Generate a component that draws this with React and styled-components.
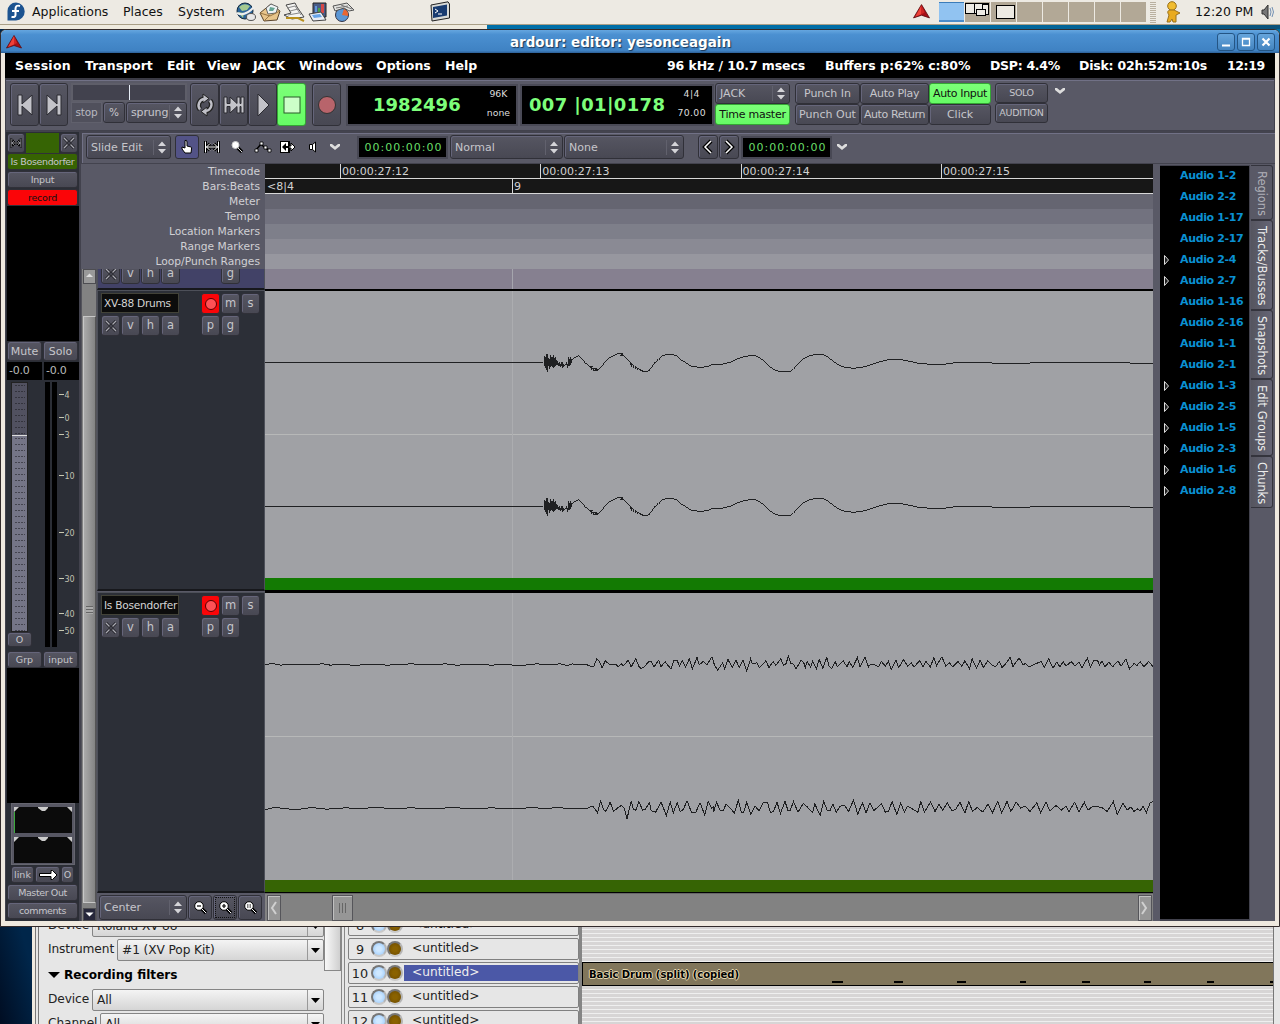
import React from "react";
import styled, { createGlobalStyle, css } from "styled-components";

const GlobalStyle = createGlobalStyle`
    * {
        box-sizing: border-box;
    }
    body {
        margin: 0;
        overflow: hidden;
        background: #001a36;
        font-family: "DejaVu Sans", sans-serif;
    }
    svg {
        display: block;
        flex: none;
    }
`;

// Wave forms
const drumWave = "M-795 97H36L40 99M43 78V107M46 80V113M49 72V119M52 72V126M55 83V109M58 86V116M61 76V112M64 82V109M67 80V110M70 74V115M73 84V111M76 81V108M79 90V106M82 94V105M85 98V109M88 97V107M91 101V110M94 97V109M97 96V113M100 103V111M103 104V108M106 101V106M109 95V106M112 101V114M115 80V109M118 88V107M121 80V106M124 86V99M124 92L132 83L139 81L145 76L150 80L157 87L166 99L173 105L180 112L192 120L203 121L212 113L224 98L238 84L252 76L266 70L278 74L290 86L302 97L314 109L326 117L347 126L357 122L366 110L375 99L386 86L398 77L410 73L430 74L440 78L454 90L466 96L476 105L490 110L512 112L530 110L550 103L580 102L600 97L620 87L640 81L660 77L678 78L692 85L706 97L718 109L732 119L746 124H780L790 118L804 102L820 86L838 77L862 73L882 75L896 83L912 95L928 106L944 112L972 115L1000 111L1024 104L1048 96L1076 89L1106 88L1130 92L1162 99L1200 103H1240L1270 99L1340 97L1410 100L1450 101L1500 99H1590L1650 97L1720 99H1800L1870 102";
const drumBursts = "M176 111H188M183 115H200M194 120H204M264 72H280M270 76H282M302 98V105M306 101V110M311 106V114M317 109V118M323 113V121M332 118V124M339 121V127M374 97V103M388 84V90M184 109V119M190 115V123";

const pianoTop = "-770,75 -750,72 -730,77 -700,74 -660,76 -620,73 -600,77 -570,74 -535,78 -500,74 -450,77 -390,73 -340,76 -300,73 -270,77 -220,74 -180,77 -150,75 -100,78 -60,73 -30,76 0,73 10,76 20,78 33,73 45,76 68,75 80,80 88,82 96,58 104,68 110,86 118,64 124,70 130,75 146,75 152,82 160,72 165,80 178,62 186,82 198,58 206,80 212,88 222,80 232,66 238,66 246,82 258,62 264,82 275,66 282,78 290,88 298,62 306,62 312,80 320,64 328,82 338,58 346,88 358,54 364,76 374,66 384,76 397,52 404,78 412,92 425,70 430,88 439,60 450,84 460,62 468,84 478,62 488,95 498,58 502,72 515,70 521,84 538,64 546,84 557,66 564,78 577,58 584,78 590,74 597,50 603,72 610,74 617,88 630,62 638,72 641,84 646,66 655,84 660,64 670,88 677,60 687,86 697,54 703,80 710,88 719,66 725,82 740,64 750,82 756,66 765,84 777,54 784,82 797,52 806,82 812,74 820,74 832,82 840,66 850,80 858,66 866,90 878,62 885,84 898,60 908,80 918,70 925,82 940,64 948,82 956,66 968,82 977,54 984,78 998,52 1008,80 1018,70 1026,82 1040,66 1050,80 1058,64 1070,88 1077,58 1088,86 1098,62 1106,84 1118,64 1126,74 1138,82 1148,66 1155,84 1165,72 1176,54 1184,82 1190,70 1200,56 1210,76 1216,72 1226,82 1240,74 1258,66 1265,84 1277,58 1288,86 1298,68 1306,82 1315,66 1322,80 1336,66 1346,80 1356,68 1364,84 1378,56 1386,82 1396,62 1404,62 1410,76 1416,64 1424,82 1434,68 1444,82 1458,64 1466,80 1479,58 1488,88 1500,72 1508,78 1516,66 1526,82 1538,66 1550,82";

const pianoBottom = "-770,510 -745,504 -720,507 -690,511 -650,504 -610,509 -560,505 -520,508 -480,503 -440,508 -390,505 -330,508 -280,504 -230,508 -180,505 -120,508 -70,504 -40,508 0,503 16,508 30,506 70,508 80,502 86,500 98,520 106,485 114,510 120,516 131,488 140,516 150,506 160,498 168,506 175,538 186,486 192,510 198,512 206,486 216,512 222,510 234,490 238,514 250,518 264,488 278,528 288,488 296,520 306,490 314,516 322,510 332,484 344,520 354,520 366,490 378,526 387,486 396,506 400,502 402,516 409,488 418,512 426,514 434,494 444,506 456,520 466,482 474,520 480,518 488,488 498,524 510,500 520,514 532,488 542,488 550,520 558,516 567,488 576,522 588,486 596,514 602,512 610,486 622,518 628,506 636,492 646,502 660,520 666,492 672,510 680,528 689,486 698,512 706,512 713,494 722,518 732,500 744,498 754,516 767,482 778,524 790,490 800,520 810,490 820,514 840,492 850,518 858,516 868,486 880,525 890,490 900,518 908,500 920,508 935,518 943,486 952,518 968,488 980,516 990,494 1000,512 1012,490 1024,514 1034,510 1045,488 1058,520 1068,486 1078,516 1090,504 1105,518 1118,494 1130,520 1144,486 1154,520 1168,486 1178,516 1192,488 1204,506 1216,500 1228,516 1246,490 1256,520 1270,488 1280,514 1296,498 1310,512 1322,500 1330,516 1345,488 1356,518 1370,488 1380,512 1392,500 1404,502 1416,504 1430,516 1446,486 1456,525 1471,490 1482,512 1492,502 1500,516 1508,508 1516,514 1524,500 1532,520 1542,490 1550,486";

const regions = [
    ["Audio 1-2"], ["Audio 2-2"], ["Audio 1-17"], ["Audio 2-17"],
    ["Audio 2-4", true], ["Audio 2-7", true], ["Audio 1-16"], ["Audio 2-16"],
    ["Audio 1-1"], ["Audio 2-1"], ["Audio 1-3", true], ["Audio 2-5", true],
    ["Audio 1-5", true], ["Audio 2-3", true], ["Audio 1-6", true], ["Audio 2-8", true],
];

const tabs = [["Regions", 55], ["Tracks/Busses", 90], ["Snapshots", 69], ["Edit Groups", 77], ["Chunks", 52]];

const rulers = [
    ["Meter", "#656571"], ["Tempo", "#72727f"], ["Location Markers", "#7e7f8a"],
    ["Range Markers", "#8a8a94"], ["Loop/Punch Ranges", "#97979f"],
];

const meterMarks = [["4", 394], ["0", 417], ["3", 434], ["10", 475], ["20", 532], ["30", 578], ["40", 613], ["50", 630]];

export default function App() {
    return (
        <Desktop>
            <GlobalStyle/>
            <GnomePanel/>
            <BackEdge/>
            <Rosegarden/>
            <Ardour/>
        </Desktop>
    );
}

function GnomePanel() {
    return (
        <PanelBar>
            <FedoraIcon/>
            <PanelText $ml={7} $w={77}>Applications</PanelText>
            <PanelText $ml={14} $w={41}>Places</PanelText>
            <PanelText $ml={14} $w={49}>System</PanelText>
            <Launchers/>
            <TerminalIcon/>
            <Spacer/>
            <RedArrow width="17" height="15"/>
            <Pager>
                <Desk $active/>
                <Desk>
                    <svg width="25" height="20" fill="#edeae3" stroke="#000" shapeRendering="crispEdges">
                        <rect x=".5" y="1.500" width="9" height="10"/><rect x="9.500" y="1.500" width="14" height="10"/>
                        <rect x="17.500" y="2.500" width="6" height="10"/><rect x="11.500" y="7.500" width="9" height="6"/>
                    </svg>
                </Desk>
                <Desk>
                    <svg width="25" height="20" fill="#edeae3" stroke="#000" shapeRendering="crispEdges">
                        <rect x="5.500" y="3.500" width="18" height="13"/>
                    </svg>
                </Desk>
                <Desk/><Desk/><Desk/><Desk/><Desk/>
            </Pager>
            <PanelGrip/>
            <PersonIcon/>
            <PanelText $ml={12} $w={58}>12:20 PM</PanelText>
            <VolumeIcon/>
        </PanelBar>
    );
}

function Ardour() {
    return (
        <ArdourWindow>
            <TitleBar>
                <RedArrow width="16" height="14"/>
                <Title>ardour: editor: yesonceagain</Title>
                <WinButton><svg width="18" height="18"><path d="M5 12.500H13" stroke="#fff" strokeWidth="2"/></svg></WinButton>
                <WinButton><svg width="18" height="18"><path d="M5.500 5.500H12.500V12.500H5.500ZM5 6H13" stroke="#fff" fill="none" strokeWidth="1.300"/></svg></WinButton>
                <WinButton><svg width="18" height="18"><path d="M5.500 5.500L12.500 12.500M12.500 5.500L5.500 12.500" stroke="#fff" strokeWidth="2.200"/></svg></WinButton>
            </TitleBar>
            <WindowBody>
                <MenuBar>
                    <MenuText $w={70} $ls={0.25}>Session</MenuText>
                    <MenuText $w={82}>Transport</MenuText>
                    <MenuText $w={40}>Edit</MenuText>
                    <MenuText $w={46}>View</MenuText>
                    <MenuText $w={46} $ls={-0.3}>JACK</MenuText>
                    <MenuText $w={77}>Windows</MenuText>
                    <MenuText $w={69}>Options</MenuText>
                    <MenuText>Help</MenuText>
                    <Spacer/>
                    <MenuText $w={158} $ls={-0.1}>96 kHz / 10.7 msecs</MenuText>
                    <MenuText $w={165}>Buffers p:62% c:80%</MenuText>
                    <MenuText $w={89} $ls={-0.3}>DSP: 4.4%</MenuText>
                    <MenuText $w={148} $ls={-0.2}>Disk: 02h:52m:10s</MenuText>
                    <MenuText $w={48} $ls={-0.4}>12:19</MenuText>
                </MenuBar>
                <Transport/>
                <Main>
                    <MixerStrip/>
                    <Editor>
                        <EditToolbar/>
                        <EditorBody>
                            <EditorLeft>
                                <RulerLabels>
                                    <span>Timecode</span>
                                    <span>Bars:Beats</span>
                                    {rulers.map(([name]) => <span key={name}>{name}</span>)}
                                </RulerLabels>
                                <TracksLeft>
                                    <VScroll>
                                        <ScrollArrow $size={15}><svg width="13" height="13"><path d="M3 8L6.500 4.500L10 8Z" fill="#ddd"/></svg></ScrollArrow>
                                        <VThumb><Grip/></VThumb>
                                        <ScrollArrow $size={13} $dark><svg width="13" height="13"><path d="M2.500 4.500H10.500L6.500 8.500Z" fill="#fff"/></svg></ScrollArrow>
                                    </VScroll>
                                    <Headers>
                                        <TrackHeader $partial><HeaderButtons partial/></TrackHeader>
                                        <TrackHeader><TrackTop name="XV-88 Drums"/><HeaderButtons/></TrackHeader>
                                        <TrackHeader><TrackTop name="Is Bosendorfer"/><HeaderButtons/></TrackHeader>
                                        <ZoomRow>
                                            <Select $w={88} $h={25}>Center<UpDown/></Select>
                                            <Button $w={24} $h={25}><ZoomIcon sign="M4 6H8"/></Button>
                                            <Button $w={24} $h={25} $dotted><ZoomIcon sign="M4 6H8M6 4V8"/></Button>
                                            <Button $w={24} $h={25}><ZoomIcon sign="M4 5H5.500M6.500 5H8M4 7H5.500M6.500 7H8"/></Button>
                                        </ZoomRow>
                                    </Headers>
                                </TracksLeft>
                            </EditorLeft>
                            <Canvas/>
                            <SidePanel/>
                        </EditorBody>
                    </Editor>
                </Main>
            </WindowBody>
        </ArdourWindow>
    );
}

function Transport() {
    return (
        <TransportBar>
            <Button $w={29} $h={43}><TIcon d="M5 6H9V15L19 6V26L9 17V26H5Z"/></Button>
            <Button $w={29} $h={43}><TIcon d="M5 6L15 15V6H19V26H15V17L5 26Z"/></Button>
            <Shuttle>
                <ShuttleTrack><ShuttleMark/></ShuttleTrack>
                <Row $gap={1}>
                    <FlatBox $w={31}>stop</FlatBox>
                    <Button $w={22} $h={21} $fs={10.5}>%</Button>
                    <Select $w={61} $h={21} $ls={-0.15}>sprung<UpDown/></Select>
                </Row>
            </Shuttle>
            <Row $ml={3}>
                <Button $w={29} $h={43}>
                    <svg width="24" height="32" fill="none">
                        <path d="M7 20.500A6.500 6.500 0 0 1 11 10M17 11.500A6.500 6.500 0 0 1 13 22" stroke="#222" strokeWidth="5"/>
                        <path d="M10 5L16 9.500L10 14ZM14 18L8 22.500L14 27Z" fill="#c0c0c8" stroke="#222"/>
                        <path d="M7 20.500A6.500 6.500 0 0 1 11 10M17 11.500A6.500 6.500 0 0 1 13 22" stroke="#c0c0c8" strokeWidth="2.400"/>
                    </svg>
                </Button>
                <Button $w={29} $h={43}><TIcon d="M2 8H5V14.500H8V8L15 14.500V8H18V14.500H19V8H22V24H19V17.500H18V24H15V17.500L8 24V17.500H5V24H2Z"/></Button>
                <Button $w={29} $h={43}><TIcon d="M7 5L18 16L7 27Z"/></Button>
                <Button $w={29} $h={43} $tone="green"><svg width="18" height="18"><rect x="1" y="1" width="16" height="16" fill="#ccffc8" stroke="#285a28"/></svg></Button>
            </Row>
            <Button $ml={6} $w={29} $h={43}><svg width="20" height="20"><circle cx="10" cy="10" r="8.500" fill="#b8646b" stroke="#333"/></svg></Button>
            <BigClock $w={172} $ml={5}>
                <ClockDigits $w={88} $ml={25}>1982496</ClockDigits>
                <ClockSide><span>96K</span><span>none</span></ClockSide>
            </BigClock>
            <BigClock $w={194} $ml={2}>
                <ClockDigits $w={138} $ml={7} $ls={0.35}>007 |01|0178</ClockDigits>
                <ClockSide $ls={0.4}><span>4|4</span><span>70.00</span></ClockSide>
            </BigClock>
            <Stack $ml={1}>
                <Select $w={75} $h={21}>JACK<UpDown/></Select>
                <Button $w={75} $h={21} $fs={11} $ls={-0.25} $tone="green">Time master</Button>
            </Stack>
            <Stack $ml={5}>
                <Button $w={65} $h={21} $fs={11}>Punch In</Button>
                <Button $w={65} $h={21} $fs={11}>Punch Out</Button>
            </Stack>
            <Stack $ml={0}>
                <Button $w={69} $h={21} $fs={11} $ls={-0.3}>Auto Play</Button>
                <Button $w={69} $h={21} $fs={11} $ls={-0.4}>Auto Return</Button>
            </Stack>
            <Stack $ml={0}>
                <Button $w={62} $h={21} $fs={11} $ls={-0.35} $tone="green">Auto Input</Button>
                <Button $w={62} $h={21} $fs={11}>Click</Button>
            </Stack>
            <Stack $ml={4}>
                <Button $w={53} $h={20} $fs={9.5} $ls={-0.4}>SOLO</Button>
                <Button $w={53} $h={20} $fs={9.5} $ls={-0.3}>AUDITION</Button>
            </Stack>
            <Chevron/>
        </TransportBar>
    );
}

function EditToolbar() {
    return (
        <ToolRow>
            <Select $w={85} $h={24}>Slide Edit<UpDown/></Select>
            <Button $w={24} $h={24} $ml={4} $tone="blue">
                <svg width="14" height="16"><path d="M5 1.500Q7 .5 7 3V7L11 8Q12 8 11.500 10L11 14H5L2 10V8L5 9Z" fill="#fff" stroke="#000"/></svg>
            </Button>
            <ToolIcon $w={25}><RangeIcon/></ToolIcon>
            <ToolIcon $w={26}><svg width="14" height="14"><path d="M7 7L12 12" stroke="#000" strokeWidth="3.500"/><path d="M7 7L12 12" stroke="#ddd" strokeWidth="1"/><circle cx="5.500" cy="5" r="3.500" fill="#fff" stroke="#ccc"/></svg></ToolIcon>
            <ToolIcon $w={25}>
                <svg width="18" height="14"><path d="M2 10L7 4L11 8L15 10" stroke="#000" fill="none" strokeWidth="1.500"/><path d="M1 9h3v3h-3zM6 2h3v3h-3zM10 6h3v3h-3zM14 9h3v3h-3z" fill="#fff" stroke="#000" strokeWidth=".8"/></svg>
            </ToolIcon>
            <ToolIcon $w={25}>
                <svg width="18" height="14"><rect x="1.500" y="1.500" width="8" height="11" fill="#fff" stroke="#000"/><path d="M10 1V13" stroke="#000" strokeWidth="2"/><path d="M3 7L7 3V6H9V8H7V11Z" fill="#000"/><path d="M10 6H12V3L16 7L12 11V8H10Z" fill="#fff" stroke="#000"/></svg>
            </ToolIcon>
            <ToolIcon $w={25}><svg width="10" height="14"><path d="M1.500 4.500H4.500V9.500H1.500Z" fill="#fff" stroke="#000"/><path d="M4.500 4.500L7.500 2V12L4.500 9.500Z" fill="#fff" stroke="#000"/></svg></ToolIcon>
            <ToolIcon $w={20}><ChevronIcon/></ToolIcon>
            <SmallClock $ml={12}>00:00:00:00</SmallClock>
            <Select $w={113} $h={24} $ml={2}>Normal<UpDown/></Select>
            <Select $w={120} $h={24} $ml={1}>None<UpDown/></Select>
            <Button $w={20} $h={24} $ml={14}><svg width="12" height="16"><path d="M9 2L3 8L9 14" stroke="#000" fill="none" strokeWidth="4"/><path d="M9 2L3 8L9 14" stroke="#fff" fill="none" strokeWidth="1.500"/></svg></Button>
            <Button $w={20} $h={24} $ml={1}><svg width="12" height="16"><path d="M3 2L9 8L3 14" stroke="#000" fill="none" strokeWidth="4"/><path d="M3 2L9 8L3 14" stroke="#fff" fill="none" strokeWidth="1.500"/></svg></Button>
            <SmallClock $ml={2}>00:00:00:00</SmallClock>
            <ToolIcon $w={20}><ChevronIcon/></ToolIcon>
        </ToolRow>
    );
}

function MixerStrip() {
    return (
        <Strip>
            <Row $gap={1}>
                <Button $w={18} $h={20}><RangeIcon small/></Button>
                <ColorSwatch/>
                <Button $w={18} $h={20}><CrossIcon/></Button>
            </Row>
            <StripButton $ls={-0.35} $tone="olive">Is Bosendorfer</StripButton>
            <StripButton $mt={1}>Input</StripButton>
            <StripButton $mt={1} $tone="red">record</StripButton>
            <BlackBox $h={135}/>
            <Row $gap={1}>
                <Button $w={35} $h={20} $fs={11}>Mute</Button>
                <Button $w={35} $h={20} $fs={11}>Solo</Button>
            </Row>
            <Row $gap={2} $mt={1}>
                <Peak>-0.0</Peak>
                <Peak>-0.0</Peak>
            </Row>
            <FaderArea>
                <FaderColumn>
                    <Fader><FaderTop/><FaderBottom/></Fader>
                    <Button $w={25} $h={15} $fs={9.5}>O</Button>
                </FaderColumn>
                <MeterBars><i/><i/></MeterBars>
                <svg width="22" height="266" fontSize="8" fill="#c0c0b0">
                    {meterMarks.map(([label, y]) => (
                        <g key={label}>
                            <path d={`M2 ${y - 381.5}H7`} stroke="#c8c8b0"/>
                            <text x="7.500" y={y - 378.5}>{label}</text>
                        </g>
                    ))}
                </svg>
            </FaderArea>
            <Row $gap={1}>
                <Button $w={35} $h={17} $fs={9.5}>Grp</Button>
                <Button $w={35} $h={17} $fs={9.5}>input</Button>
            </Row>
            <BlackBox $h={135}/>
            <PanBox>
                <PanIcon active/>
                <PanIcon/>
            </PanBox>
            <Row $gap={1} $ml={4}>
                <Button $w={23} $h={17} $fs={9.5}>link</Button>
                <Button $w={25} $h={17}><svg width="20" height="12"><path d="M1.500 4.500H13V1.500H14.500L19 6L14.500 10.500H13V7.500H1.500Z" fill="#fff" stroke="#000"/></svg></Button>
                <Button $w={13} $h={17} $fs={9.5}>O</Button>
            </Row>
            <StripButton $mt={1} $ls={-0.4}>Master Out</StripButton>
            <StripButton $mt={1} $ls={-0.4}>comments</StripButton>
        </Strip>
    );
}

function TrackTop({ name }) {
    return (
        <Row $pl={1}>
            <NameBox>{name}</NameBox>
            <Button $w={19} $h={21} $ml={22} $tone="red"><svg width="14" height="14"><circle cx="7" cy="7" r="5.500" fill="#ff5055" stroke="#5a0000"/></svg></Button>
            <Button $w={19} $h={21} $ml={1} $fs={11.5}>m</Button>
            <Button $w={19} $h={21} $ml={1} $fs={11.5}>s</Button>
        </Row>
    );
}

function HeaderButtons({ partial }) {
    return (
        <Row $pl={1} $gap={1} $mt={1}>
            <Button $w={19} $h={21}><CrossIcon/></Button>
            <Button $w={19} $h={21} $fs={11.5}>v</Button>
            <Button $w={19} $h={21} $fs={11.5}>h</Button>
            <Button $w={19} $h={21} $fs={11.5}>a</Button>
            {partial ? <Blank/> : <Button $w={19} $h={21} $fs={11.5} $ml={20}>p</Button>}
            <Button $w={19} $h={21} $fs={11.5}>g</Button>
        </Row>
    );
}

function Canvas() {
    return (
        <CanvasColumn>
            <TimeRuler>
                {["00:00:27:12", "00:00:27:13", "00:00:27:14", "00:00:27:15"].map((t) => <Tick key={t}>{t}</Tick>)}
            </TimeRuler>
            <TimeRuler>
                <BarTick $w={247} $first>&lt;8|4</BarTick>
                <BarTick>9</BarTick>
            </TimeRuler>
            {rulers.map(([name, color]) => <RulerBand key={name} $color={color}/>)}
            <PartialTrack><svg width="888" height="20"><path d="M247.500 0V20" stroke="#a5a5ad"/></svg></PartialTrack>
            <Wave $gap={2}>
                <svg width="888" height="287" fill="none" shapeRendering="crispEdges">
                    <path d="M0 143.500H888" stroke="#b7b8b8"/>
                    <path d="M247.500 0V287" stroke="#acadb0"/>
                    {[0, 144].map((dy) => (
                        <g key={dy} transform={`translate(265 ${39 + dy}) scale(.33333)`} stroke="#1f2022" strokeWidth="3">
                            <path d={drumWave}/>
                            <path d={drumBursts}/>
                        </g>
                    ))}
                </svg>
            </Wave>
            <RegionBar $color="#137a03"/>
            <Wave $gap={3}>
                <svg width="888" height="287" fill="none" shapeRendering="crispEdges">
                    <path d="M0 143.500H888" stroke="#b7b8b8"/>
                    <path d="M247.500 0V287" stroke="#acadb0"/>
                    <g transform="translate(295 46.500) scale(.3827 .3333)" stroke="#1f2022">
                        <polyline points={pianoTop} vectorEffect="non-scaling-stroke"/>
                        <polyline points={pianoBottom} vectorEffect="non-scaling-stroke"/>
                    </g>
                </svg>
            </Wave>
            <RegionBar $color="#366404"/>
            <HScroll>
                <HButton><svg width="12" height="24"><path d="M8 6L4 12L8 18" stroke="#d0d0d0" strokeWidth="2" fill="none"/></svg></HButton>
                <HThumb><svg width="12" height="10"><path d="M2.500 0V10M5.500 0V10M8.500 0V10" stroke="#666"/></svg></HThumb>
                <HButton><svg width="12" height="24"><path d="M3 6L7 12L3 18" stroke="#d0d0d0" strokeWidth="2" fill="none"/></svg></HButton>
            </HScroll>
        </CanvasColumn>
    );
}

function SidePanel() {
    return (
        <Side>
            <RegionList>
                {regions.map(([name, children]) => (
                    <RegionRow key={name}>
                        <svg width="16" height="12">{children && <path d="M1.500 1.500V10.500L5.500 6Z" fill="#222" stroke="#ddd"/>}</svg>
                        {name}
                    </RegionRow>
                ))}
            </RegionList>
            <Tabs>
                {tabs.map(([name, h], i) => <Tab key={name} $h={h} $active={i === 0}>{name}</Tab>)}
            </Tabs>
        </Side>
    );
}

function Rosegarden() {
    return (
        <RoseWindow>
            <RoseSide>
                <FormRow>Device<Combo>Roland XV-88<DownArrow/></Combo></FormRow>
                <FormRow>Instrument<Combo>#1 (XV Pop Kit)<DownArrow/></Combo></FormRow>
                <FormHeading><svg width="12" height="8"><path d="M0 1H12L6 7Z"/></svg>Recording filters</FormHeading>
                <FormRow>Device<Combo>All<DownArrow/></Combo></FormRow>
                <FormRow>Channel<Combo>All<DownArrow/></Combo></FormRow>
            </RoseSide>
            <RoseScroll/>
            <TrackList>
                {[8, 9, 10, 11, 12].map((n) => (
                    <RoseTrack key={n}>
                        <b>{n}</b>
                        <Led $color="#79b8fb" $shine="#cfe8ff"/>
                        <Led $color="#5d3f00" $shine="#8a6200"/>
                        <Untitled $active={n === 10}>&lt;untitled&gt;</Untitled>
                    </RoseTrack>
                ))}
            </TrackList>
            <Segments>
                <Segment>
                    Basic Drum (split) (copied)
                    <svg width="441" height="3"><path d="M0 1H11M62 1H71M125 1H134M188 1H194M250 1H258M312 1H319M375 1H382M438 1H441" stroke="#000" strokeWidth="2"/></svg>
                </Segment>
            </Segments>
        </RoseWindow>
    );
}

// Icons
const TIcon = ({ d }) => <svg width="24" height="32"><path d={d} fill="#c3c3c9" stroke="#2a2a30" strokeWidth="1"/></svg>;

const ChevronIcon = () => <svg width="12" height="8"><path d="M1 1H3L6 3.500L9 1H11V3L6 7L1 3Z" fill="#ddd"/></svg>;

const Chevron = () => <ChevronWrap><ChevronIcon/></ChevronWrap>;

const UpDown = () => (
    <UpDownWrap>
        <svg width="8" height="13"><path d="M0 5L4 .5L8 5ZM0 8L4 12.500L8 8Z" fill="#d4d4d8"/></svg>
    </UpDownWrap>
);

const RangeIcon = ({ small }) => (
    <svg width={small ? 12 : 16} height={small ? 10 : 12} viewBox="0 0 16 12">
        <path d="M1.500 0V12M14.500 0V12M2 6H14M6 2.500L2.500 6L6 9.500M10 2.500L13.500 6L10 9.500" fill="none" stroke="#000" strokeWidth="3"/>
        <path d="M1.500 .5V11.500M14.500 .5V11.500M2 6H14M6 2.500L2.500 6L6 9.500M10 2.500L13.500 6L10 9.500" fill="none" stroke={small ? "#b8b8c0" : "#fff"}/>
    </svg>
);

const CrossIcon = () => (
    <svg width="12" height="12">
        <path d="M1 1L11 11M11 1L1 11" stroke="#222228" strokeWidth="3"/>
        <path d="M1 1L4.500 4.500M11 1L7.500 4.500M1 11L4.500 7.500M11 11L7.500 7.500" stroke="#aaaab2" strokeWidth="1.300"/>
        <circle cx="6" cy="6" r="1.600" fill="#44444e"/>
    </svg>
);

const ZoomIcon = ({ sign }) => (
    <svg width="15" height="15">
        <path d="M9 9L13 13" stroke="#000" strokeWidth="3.500"/><path d="M9 9L13 13" stroke="#fff"/>
        <circle cx="6" cy="6" r="4.300" fill="#fff" stroke="#000"/><path d={sign} stroke="#000" strokeWidth="1.200"/>
    </svg>
);

const PanIcon = ({ active }) => (
    <svg width="58" height="26">
        <rect width="58" height="26" fill="#0b0b0b"/>
        <path d="M0 0H5L0 5ZM24 0H34V1L31 4H28L24 1ZM53 0H58V5Z" fill="#ccc"/>
        {active && <path d="M.5 5V26" stroke="#3caa3c"/>}
    </svg>
);

const DownArrow = () => <ComboArrow><svg width="9" height="5"><path d="M0 0H9L4.500 5Z"/></svg></ComboArrow>;

const RedArrow = (props) => (
    <svg viewBox="0 0 16 14" {...props}>
        <path d="M8 .5L15.500 13L8 10.500L.5 13Z" fill="#a50f16" stroke="#5c0d12" strokeWidth=".8"/>
        <path d="M8 1V9.500L2 12Z" fill="#ee4138"/>
        <path d="M8 1L11 8L8 9.500Z" fill="#cf2423"/>
    </svg>
);

const FedoraIcon = () => (
    <svg width="18" height="19" viewBox="0 0 18 19">
        <path d="M9 .5A8.700 9 0 1 1 9 18.500H.5V9A8.500 8.500 0 0 1 9 .5Z" fill="#1c5390"/>
        <path d="M13 4Q8.500 2.500 8.500 7V13Q8.500 15.500 4.500 15M5 9H12" fill="none" stroke="#fff" strokeWidth="2"/>
    </svg>
);

const Launchers = () => (
    <LauncherRow>
        <svg width="22" height="20">
            <circle cx="10" cy="9" r="8" fill="#2c6499" stroke="#142a3c"/><path d="M4 5Q9 0 15 4L12 8L7 9ZM3 10L9 11L8 16Z" fill="#a5c98f"/>
            <path d="M2 11Q10 15 19 5" fill="none" stroke="#eee" strokeWidth="2"/><ellipse cx="16" cy="15" rx="4.500" ry="3.500" fill="#e8e8e8" stroke="#555"/>
        </svg>
        <svg width="22" height="20">
            <path d="M1 11L12 2L21 9L18 18L5 19Z" fill="#e8c58b" stroke="#5a452c"/><path d="M7 6L12 2L19 5L17 11L9 12Z" fill="#eef3f5" stroke="#666"/><path d="M11 5L16 6L14 9L10 9Z" fill="#65a594"/><path d="M1 11L11 14L21 9M5 19L11 13" fill="none" stroke="#997644"/>
        </svg>
        <svg width="23" height="20">
            <path d="M3 3L12 1L14 5L21 15L9 17L1 13L8 11Z" fill="#f4f4f2" stroke="#444"/><path d="M4 6L12 4M7 9L15 7M5 13L16 11M12 4L18 13" stroke="#888"/><path d="M3 16L15 16L21 19" stroke="#b9901c" strokeWidth="2" fill="none"/>
        </svg>
        <svg width="22" height="20">
            <path d="M5 1H18V15H5Z" fill="#4a5c85" stroke="#222"/><path d="M7 10V4H9V10Z" fill="#5e95dc"/><path d="M10 10V6H12V10Z" fill="#4aa04a"/><path d="M13 11V2H16V11Z" fill="#d44848"/><path d="M1 12L13 10L18 18L5 19Z" fill="#e9edf4" stroke="#444"/><path d="M4 13L12 12L14 15L6 16Z" fill="#68a5e9"/>
        </svg>
        <svg width="24" height="20">
            <circle cx="10" cy="13" r="6.500" fill="#5b97d5" stroke="#334"/><path d="M10 13L12 7Q17 9 16 14Z" fill="#e96732"/><path d="M1 4L15 1L22 8L17 9L12 6L3 9Z" fill="#e2e2df" stroke="#555"/><path d="M4 6L16 4M9 3L20 7" stroke="#777"/>
        </svg>
    </LauncherRow>
);

const TerminalIcon = () => (
    <TerminalSvg width="20" height="21" viewBox="0 0 20 21">
        <path d="M1 4L18 .8L19.500 3V17L2 20Z" fill="#d8dad7" stroke="#222"/><path d="M3 6L17 3.500V14.500L3 17Z" fill="#183b70"/><path d="M5 8L8 10L5 12M8 13H12" stroke="#fff" fill="none"/>
    </TerminalSvg>
);

const PersonIcon = () => (
    <svg width="18" height="22">
        <circle cx="7" cy="5" r="4.300" fill="#f1bc2f" stroke="#996f17"/><path d="M5 9H9L15 12L11 14V21H8L7 18L5 21H2L4 14Q1 10 5 9Z" fill="#e9ab20" stroke="#9a721e"/>
    </svg>
);

const VolumeIcon = () => (
    <VolumeSvg width="14" height="16">
        <path d="M1 6H3L7 1V15L3 10H1Z" fill="#777" stroke="#333"/><path d="M9 4Q11 8 9 12M11 3Q14 8 11 13" fill="none" stroke="#7290b3"/>
    </VolumeSvg>
);

// Desktop
const Desktop = styled.div`
    position: relative;
    width: 1280px;
    height: 1024px;
    overflow: hidden;
    background: linear-gradient(75deg, #000d22, #00264a 3%, #00264a 60%, #0070a8);
`;
const Spacer = styled.div`
    flex: 1;
`;
const PanelBar = styled.div`
    display: flex;
    align-items: center;
    height: 25px;
    padding: 0 5px 1px 7px;
    background: #edeae3;
    border-bottom: 1px solid #a99f87;
`;
const PanelText = styled.span`
    width: ${(p) => p.$w}px;
    margin-left: ${(p) => p.$ml}px;
    font-size: 12.500px;
    white-space: nowrap;
    color: #111;
`;
const LauncherRow = styled.div`
    display: flex;
    margin-left: 8px;
    gap: 2px;
`;
const TerminalSvg = styled.svg`
    margin-left: 74px;
`;
const VolumeSvg = styled.svg`
    margin-left: 8px;
`;
const Pager = styled.div`
    display: flex;
    gap: 1px;
    margin-left: 9px;
`;
const Desk = styled.div`
    width: 25px;
    height: 20px;
    background: ${(p) => (p.$active ? "#91c3f1" : "#b2a896")};
    ${(p) => p.$active && css`
        border-top: 1px solid #3b7cb9;
        border-bottom: 2px solid #4b8cc9;
    `}
`;
const PanelGrip = styled.div`
    width: 6px;
    height: 22px;
    margin: 0 9px 0 4px;
    background: repeating-linear-gradient(#edeae3 0 1px, #b9b0a0 1px 2px);
`;
const BackEdge = styled.div`
    height: 4px;
    background: linear-gradient(90deg, #efebdf 487px, #006fa8 487px, #006da5 960px, #0b5279);
`;
const ArdourWindow = styled.div`
    position: absolute;
    left: 0;
    top: 29px;
    width: 1280px;
    height: 898px;
    border: 1px solid #332b2b;
    border-radius: 6px 6px 0 0;
    background: #efe9df;
    overflow: hidden;
`;
const TitleBar = styled.div`
    display: flex;
    align-items: center;
    height: 23px;
    padding: 0 4px 0 5px;
    gap: 2px;
    background: linear-gradient(#65a6df, #4b90d1 20%, #3f82c3 90%, #2d5f95);
`;
const Title = styled.div`
    flex: 1;
    padding-left: 2px;
    text-align: center;
    color: #fff;
    font-size: 13.500px;
    font-weight: bold;
    line-height: 18px;
    text-shadow: 1px 1px 1px #1c3858;
`;
const WinButton = styled.div`
    width: 18px;
    height: 18px;
    border: 1px solid #245584;
    border-radius: 3px;
    background: linear-gradient(#66a5dc, #4384c0);
    svg {
        margin: -1px;
    }
`;
const WindowBody = styled.div`
    width: 1270px;
    height: 868px;
    margin-left: 4px;
    background: #595966;
`;
const MenuBar = styled.div`
    display: flex;
    align-items: center;
    height: 25px;
    padding-left: 10px;
    background: #000;
`;
const MenuText = styled.span`
    width: ${(p) => (p.$w ? `${p.$w}px` : "auto")};
    color: #fff;
    font-size: 12.500px;
    font-weight: bold;
    letter-spacing: ${(p) => p.$ls || 0}px;
    white-space: nowrap;
`;

// Shared controls
const Row = styled.div`
    display: flex;
    gap: ${(p) => p.$gap || 0}px;
    margin-left: ${(p) => p.$ml || 0}px;
    margin-top: ${(p) => p.$mt || 0}px;
    padding-left: ${(p) => p.$pl || 0}px;
`;
const Stack = styled.div`
    display: flex;
    flex-direction: column;
    flex: none;
    margin-left: ${(p) => p.$ml}px;
`;
const tones = {
    grey: "linear-gradient(#565662, #484853)",
    green: "linear-gradient(#7cff78, #66fb65)",
    blue: "#535387",
    olive: "#376302",
    red: "#fb0508",
};
const Button = styled.div`
    display: flex;
    align-items: center;
    justify-content: center;
    flex: none;
    width: ${(p) => p.$w}px;
    height: ${(p) => p.$h}px;
    margin-left: ${(p) => p.$ml || 0}px;
    margin-top: ${(p) => p.$mt || 0}px;
    border: 1px solid ${(p) => (p.$tone === "green" ? "#34a634" : "#303038")};
    border-radius: 3px;
    box-shadow: inset 1px 1px ${(p) => (p.$tone ? "transparent" : "#65657a")};
    background: ${(p) => tones[p.$tone || "grey"]};
    color: ${(p) => (p.$tone === "green" || p.$tone === "red" ? "#111" : "#c6c6cb")};
    font-size: ${(p) => p.$fs || 11}px;
    letter-spacing: ${(p) => p.$ls || 0}px;
    line-height: 1;
    white-space: nowrap;
    ${(p) => p.$dotted && css`
        outline: 1px dotted #111;
        outline-offset: -3px;
    `}
`;
const Select = styled(Button)`
    justify-content: space-between;
    padding-left: 4px;
`;
const StripButton = styled(Button)`
    width: 71px;
    height: 17px;
    font-size: 9.500px;
    letter-spacing: ${(p) => p.$ls || -0.2}px;
`;
const UpDownWrap = styled.span`
    display: flex;
    align-items: center;
    height: 15px;
    padding: 0 4px;
    border-left: 1px solid #61616d;
`;
const FlatBox = styled.div`
    width: ${(p) => p.$w}px;
    height: 21px;
    background: #50505c;
    border: 1px solid #60606c;
    color: #b8b8c0;
    font-size: 10.500px;
    line-height: 18px;
    text-align: center;
    letter-spacing: -0.2px;
`;

// Transport
const TransportBar = styled.div`
    display: flex;
    height: 53px;
    padding: 3px 0 0 4px;
    border: 1px solid #41414c;
    border-top: 2px solid #3b3b45;
    box-shadow: inset 0 1px #717186;
`;
const Shuttle = styled.div`
    width: 116px;
    margin-left: 3px;
`;
const ShuttleTrack = styled.div`
    height: 19px;
    border: 2px solid #5e5e69;
    background: #42424e;
`;
const ShuttleMark = styled.div`
    width: 1px;
    height: 15px;
    margin-left: 56px;
    background: #e7eef8;
`;
const BigClock = styled.div`
    display: flex;
    align-items: center;
    flex: none;
    width: ${(p) => p.$w}px;
    height: 42px;
    margin-left: ${(p) => p.$ml}px;
    margin-top: 1px;
    background: #000;
    border: 2px solid #4a4a56;
    justify-content: space-between;
    padding-right: 6px;
`;
const ClockDigits = styled.span`
    width: ${(p) => p.$w}px;
    margin-left: ${(p) => p.$ml}px;
    padding-bottom: 2px;
    color: #7dff7b;
    font-size: 18px;
    font-weight: bold;
    letter-spacing: ${(p) => p.$ls || 0}px;
    white-space: nowrap;
`;
const ClockSide = styled.span`
    display: flex;
    flex-direction: column;
    align-items: center;
    gap: 9px;
    padding-bottom: 3px;
    color: #ddd;
    font-size: 9.300px;
    letter-spacing: ${(p) => p.$ls || 0}px;
    line-height: 10px;
`;
const ChevronWrap = styled.div`
    margin: 4px 0 0 6px;
`;

// Mixer strip
const Main = styled.div`
    display: flex;
    height: 790px;
`;
const Strip = styled.div`
    width: 76px;
    padding: 1px 0 0 1px;
    border: 1px solid #42424d;
    border-width: 1px 2px 0 1px;
    background: #2b2e36;
`;
const ColorSwatch = styled.div`
    width: 33px;
    height: 20px;
    background: #366404;
`;
const BlackBox = styled.div`
    width: 72px;
    height: ${(p) => p.$h}px;
    background: #000;
`;
const Peak = styled.div`
    width: 35px;
    height: 18px;
    padding-left: 2px;
    background: #000;
    color: #bbb;
    font-size: 11px;
    line-height: 17px;
    letter-spacing: -0.2px;
`;
const FaderArea = styled.div`
    display: flex;
    height: 271px;
    padding-top: 2px;
`;
const FaderColumn = styled.div`
    width: 38px;
`;
const Fader = styled.div`
    width: 17px;
    height: 250px;
    margin-left: 4px;
    border: 1px solid #222;
`;
// rows of small notches every 6px
const notches = (base, dark) => css`
    background:
        linear-gradient(90deg, ${base} 2px, transparent 2px 13px, ${base} 13px),
        repeating-linear-gradient(${base} 0 2px, transparent 2px 3px, ${base} 3px 6px),
        repeating-linear-gradient(90deg, ${dark} 0 2px, ${base} 2px 3px);
`;
const FaderTop = styled.div`
    height: 53px;
    border-bottom: 1px solid #ddd;
    ${notches("#515160", "#33333c")}
`;
const FaderBottom = styled.div`
    height: 195px;
    ${notches("#757587", "#44444f")}
`;
const MeterBars = styled.div`
    display: flex;
    gap: 2px;
    width: 12px;
    i {
        width: 5px;
        height: 265px;
        background: #000;
    }
`;
const PanBox = styled.div`
    display: flex;
    flex-direction: column;
    gap: 4px;
    width: 64px;
    height: 62px;
    margin: 0 0 1px 4px;
    padding: 3px 2px;
    background: #575763;
    border: 1px solid #65656f;
`;

// Editor
const Editor = styled.div`
    flex: 1;
    min-width: 0;
`;
const ToolRow = styled.div`
    display: flex;
    align-items: center;
    height: 33px;
    padding: 0 0 2px 4px;
    border: 1px solid #43434e;
    border-width: 2px 0 1px 1px;
    box-shadow: inset 1px 1px #717186;
`;
const ToolIcon = styled.div`
    display: flex;
    justify-content: center;
    flex: none;
    width: ${(p) => p.$w}px;
`;
const SmallClock = styled.div`
    flex: none;
    width: 91px;
    height: 23px;
    margin-left: ${(p) => p.$ml}px;
    border: 2px solid #484854;
    background: #000;
    color: #68de68;
    font-size: 11px;
    line-height: 19px;
    letter-spacing: 1px;
    text-align: center;
    text-indent: 2px;
`;
const EditorBody = styled.div`
    display: flex;
`;
const EditorLeft = styled.div`
    width: 184px;
`;
const RulerLabels = styled.div`
    display: flex;
    flex-direction: column;
    height: 105px;
    padding-right: 5px;
    color: #d0d0d4;
    font-size: 10.700px;
    line-height: 15px;
    text-align: right;
`;
const TracksLeft = styled.div`
    display: flex;
    height: 652px;
`;
const VScroll = styled.div`
    width: 16px;
    padding: 0 0 0 1px;
    background: #828282;
    border: 1px solid #54545c;
    border-width: 0 1px;
`;
const ScrollArrow = styled.div`
    height: ${(p) => p.$size}px;
    margin-top: ${(p) => (p.$dark ? 5 : 0)}px;
    border: 1px solid #4d4d51;
    background: ${(p) => (p.$dark ? "#27283b" : "#999")};
    svg {
        margin: -1px;
    }
`;
const VThumb = styled.div`
    display: flex;
    align-items: center;
    justify-content: center;
    height: 587px;
    margin-top: 32px;
    border: 1px solid #c7c7c7;
    border-right-color: #555;
    background: linear-gradient(90deg, #aaa, #838383);
`;
const Grip = styled.div`
    width: 7px;
    height: 8px;
    background: repeating-linear-gradient(#666 0 1px, #aaa 1px 3px);
`;
const Headers = styled.div`
    width: 168px;
`;
const TrackHeader = styled.div`
    height: ${(p) => (p.$partial ? 21 : 301)}px;
    padding: 2px;
    overflow: hidden;
    border: 1px solid #4d5059;
    border-bottom: 2px solid #17181c;
    background: ${(p) => (p.$partial ? "#424267" : "#2c2f37")};
    & + & {
        margin-bottom: 1px;
    }
    ${(p) => p.$partial && css`
        padding-top: 0;
        border-top: 0;
        ${Row} {
            margin-top: -6px;
        }
    `}
`;
const NameBox = styled.div`
    width: 78px;
    height: 20px;
    padding-left: 2px;
    background: #0c0c0c;
    border: 1px solid #424238;
    color: #d5d5d5;
    font-size: 10.600px;
    letter-spacing: -0.25px;
    line-height: 19px;
    white-space: nowrap;
`;
const Blank = styled.div`
    width: 39px;
`;
const ZoomRow = styled.div`
    display: flex;
    gap: 1px;
    padding: 1px 0 0 2px;
`;

// Canvas
const CanvasColumn = styled.div`
    width: 888px;
    background: #000;
`;
const TimeRuler = styled.div`
    display: flex;
    height: 15px;
    padding-left: 75px;
    background: #171717;
    border-bottom: 1px solid #d8d8d8;
    & + & {
        padding-left: 0;
    }
`;
const Tick = styled.div`
    width: 200.300px;
    height: 14px;
    padding-left: 1px;
    border-left: 1px solid #d8d8d8;
    color: #d2d2d2;
    font-size: 11px;
    line-height: 16px;
`;
const BarTick = styled(Tick)`
    width: ${(p) => p.$w || 100}px;
    border-left-color: ${(p) => (p.$first ? "#171717" : "#d8d8d8")};
`;
const RulerBand = styled.div`
    height: 15px;
    background: ${(p) => p.$color};
`;
const PartialTrack = styled.div`
    height: 20px;
    background: #868090;
`;
const Wave = styled.div`
    height: 287px;
    margin-top: ${(p) => p.$gap}px;
    background: #a0a1a5;
`;
const RegionBar = styled.div`
    height: 12px;
    margin-bottom: 1px;
    background: ${(p) => p.$color};
`;
const HScroll = styled.div`
    display: flex;
    align-items: center;
    height: 28px;
    padding: 0 1px 0 2px;
    background: #828282;
    border-top: 1px solid #666;
`;
const HButton = styled.div`
    width: 14px;
    height: 26px;
    border: 1px solid #55555a;
    box-shadow: inset 1px 1px #c0c0c0;
    background: #969696;
    &:last-child {
        margin-left: auto;
    }
`;
const HThumb = styled(HButton)`
    display: flex;
    align-items: center;
    justify-content: center;
    width: 21px;
    margin-left: 51px;
`;

// Right lists
const Side = styled.div`
    display: flex;
    flex: 1;
    padding: 1px 1px 0 7px;
    height: 757px;
`;
const RegionList = styled.div`
    width: 90px;
    background: #000;
    border: 1px solid #42424d;
    border-width: 1px 1px 2px 0;
`;
const RegionRow = styled.div`
    display: flex;
    align-items: center;
    gap: 1px;
    height: 21px;
    padding: 0 0 2px 3px;
    color: #0a90d2;
    font-size: 11px;
    font-weight: bold;
    letter-spacing: -0.35px;
    white-space: nowrap;
`;
const Tabs = styled.div`
    width: 24px;
    padding-left: 1px;
`;
const Tab = styled.div`
    display: flex;
    align-items: center;
    width: 22px;
    height: ${(p) => p.$h}px;
    padding-top: 5px;
    writing-mode: vertical-rl;
    border: 1px solid #34343d;
    border-left: 0;
    border-radius: 0 3px 3px 0;
    background: ${(p) => (p.$active ? "#595966" : "linear-gradient(90deg, #55555f, #656575)")};
    color: ${(p) => (p.$active ? "#b0b0b8" : "#eee")};
    font-size: 11.400px;
    line-height: 21px;
    justify-content: flex-start;
    white-space: nowrap;
`;

// Window behind
const RoseWindow = styled.div`
    position: absolute;
    left: 32px;
    top: 914px;
    display: flex;
    width: 1248px;
    height: 110px;
    overflow: hidden;
    background: #e6e6e6;
    border-left: 3px solid #efe9df;
    font-size: 12.200px;
    color: #222;
`;
const RoseSide = styled.div`
    width: 289px;
    padding: 1px 0 0 9px;
    border-left: 4px double #777;
`;
const FormRow = styled.div`
    display: flex;
    gap: 3px;
    height: 24px;
    line-height: 21px;
    letter-spacing: -0.1px;
`;
const Combo = styled.div`
    display: flex;
    justify-content: space-between;
    flex: 1;
    height: 22px;
    padding-left: 4px;
    border: 1px solid #858585;
    border-radius: 2px;
    background: linear-gradient(#f4f4f4, #d5d5d5);
    line-height: 20px;
`;
const ComboArrow = styled.span`
    display: flex;
    align-items: center;
    padding: 0 3px;
    border-left: 1px solid #999;
`;
const FormHeading = styled.div`
    display: flex;
    align-items: center;
    gap: 4px;
    height: 26px;
    padding-bottom: 2px;
    color: #000;
    font-size: 12.100px;
    font-weight: bold;
`;
const RoseScroll = styled.div`
    width: 17px;
    height: 57px;
    border: 1px solid #888;
    background: linear-gradient(90deg, #f8f8f8, #cfcfcf);
`;
const TrackList = styled.div`
    display: flex;
    flex-direction: column;
    gap: 2px;
    width: 241px;
    padding-left: 3px;
    border-left: 4px double #888;
    border-right: 3px solid #858585;
`;
const RoseTrack = styled.div`
    display: flex;
    align-items: center;
    flex: none;
    height: 22px;
    border: 1px solid #808080;
    border-radius: 2px;
    b {
        width: 22px;
        padding-top: 1px;
        font-size: 12.800px;
        font-weight: normal;
        text-align: center;
    }
`;
const Led = styled.span`
    width: 16px;
    height: 16px;
    border: 2.500px solid #777;
    border-right-color: #b5b5b5;
    border-bottom-color: #c9c9c9;
    border-radius: 50%;
    background: radial-gradient(${(p) => p.$shine} 20%, ${(p) => p.$color}) border-box;
`;
const Untitled = styled.span`
    flex: 1;
    height: 16px;
    margin-left: 1px;
    padding-left: 8px;
    background: ${(p) => (p.$active ? "#4b58a7" : "transparent")};
    color: ${(p) => (p.$active ? "#eee" : "#222")};
    line-height: 15px;
`;
const Segments = styled.div`
    width: 692px;
    height: 110px;
    padding-top: 48px;
    background: repeating-linear-gradient(#d7d5d5 0 3px, #efefef 3px 4px);
    border-right: 1px solid #777;
`;
const Segment = styled.div`
    height: 24px;
    padding: 5px 0 0 6px;
    background: #81765b;
    border: 1px solid #000;
    border-right: 0;
    color: #000;
    font-size: 10px;
    font-weight: bold;
    letter-spacing: -0.05px;
    line-height: 13px;
    text-shadow: 1px 0 #e4d7b0, -1px 0 #e4d7b0, 0 1px #e4d7b0, 0 -1px #e4d7b0;
    svg {
        margin-left: 243px;
    }
`;
